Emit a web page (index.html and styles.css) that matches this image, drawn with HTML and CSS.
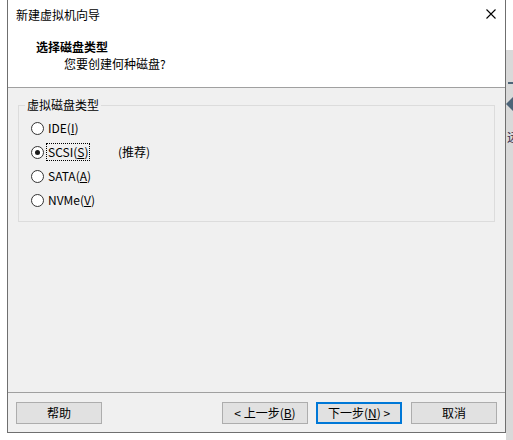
FILE: index.html
```html
<!DOCTYPE html>
<html lang="zh-CN">
<head>
<meta charset="utf-8">
<title>新建虚拟机向导</title>
<link rel="stylesheet" href="styles.css">
</head>
<body>
<div class="window">
  <div class="titlebar">
    <span class="title">新建虚拟机向导</span>
    <svg class="close" width="10" height="10" viewBox="0 0 10 10" aria-hidden="true">
      <path d="M0.5 0.5 L9.5 9.5 M9.5 0.5 L0.5 9.5" stroke="#000" stroke-width="1.1" fill="none"/>
    </svg>
  </div>
  <div class="header">
    <div class="heading">选择磁盘类型</div>
    <div class="subtitle">您要创建何种磁盘?</div>
  </div>
  <div class="content">
    <fieldset class="group">
      <legend class="legend">虚拟磁盘类型</legend>
      <div class="options">
        <div class="row">
          <span class="radio"></span><span class="label">IDE(<u>I</u>)</span>
        </div>
        <div class="row">
          <span class="opt"><span class="radio checked"></span><span class="label focus">SCSI(<u>S</u>)</span></span>
          <span class="rec">(推荐)</span>
        </div>
        <div class="row">
          <span class="radio"></span><span class="label">SATA(<u>A</u>)</span>
        </div>
        <div class="row">
          <span class="radio"></span><span class="label">NVMe(<u>V</u>)</span>
        </div>
      </div>
    </fieldset>
  </div>
  <div class="footer">
    <button class="btn">帮助</button>
    <span class="grow"></span>
    <button class="btn">&lt; 上一步(<u>B</u>)</button>
    <button class="btn primary">下一步(<u>N</u>) &gt;</button>
    <button class="btn cancel">取消</button>
  </div>
</div>
<div class="side">
  <div class="side-top"></div>
  <div class="side-rest">
    <span class="dash"></span>
    <span class="arrow"></span>
    <span class="glyph">远</span>
  </div>
</div>
</body>
</html>
```

FILE: styles.css
```css
html, body {
  margin: 0;
  padding: 0;
}
body {
  background: #fff;
  display: flex;
  height: 440px;
  overflow: hidden;
  font-family: "Noto Sans CJK SC", "Microsoft YaHei", "Noto Sans", sans-serif;
  font-size: 12px;
  color: #000;
}
.window {
  margin-left: 7px;
  width: 497px;
  height: 432px;
  border: 1px solid #6f6f6f;
  border-top: none;
  display: flex;
  flex-direction: column;
  background: #f0f0f0;
  flex: none;
}
.titlebar {
  height: 30px;
  background: #fff;
  display: flex;
  align-items: center;
  justify-content: space-between;
  padding: 0 9px 0 8px;
}
.title {
  line-height: 16px;
}
.close {
  display: block;
  margin-bottom: 2px;
}
.header {
  background: #fff;
  height: 58px;
  box-sizing: border-box;
  border-bottom: 1px solid #a0a0a0;
  padding-top: 8px;
}
.heading {
  font-weight: bold;
  line-height: 17px;
  padding-left: 28px;
}
.subtitle {
  line-height: 17px;
  padding-left: 56px;
}
.content {
  flex: 1;
  padding-top: 9px;
}
.group {
  margin: 0 10px;
  padding: 3px 0 9px 0;
  border: 1px solid #dcdcdc;
  min-width: 0;
}
.legend {
  margin-left: 6px;
  padding: 0 2px;
  line-height: 16px;
}
.options {
  padding-left: 12px;
}
.row {
  display: flex;
  align-items: center;
  height: 24px;
}
.opt {
  display: flex;
  align-items: center;
  width: 87px;
  flex: none;
}
.radio {
  width: 13px;
  height: 13px;
  box-sizing: border-box;
  border: 1px solid #333;
  border-radius: 50%;
  background: #fff;
  margin-right: 2px;
  display: flex;
  align-items: center;
  justify-content: center;
  flex: none;
}
.radio.checked::after {
  content: "";
  width: 5px;
  height: 5px;
  border-radius: 50%;
  background: #1a1a1a;
}
.label {
  border: 1px dotted transparent;
  padding: 0 1px;
  line-height: 16px;
}
.label.focus {
  border-color: #000;
}
.rec {
  line-height: 16px;
}
.footer {
  border-top: 1px solid #a0a0a0;
  padding: 9px 8px 8px;
  display: flex;
}
.grow {
  flex: 1;
}
.btn {
  width: 86px;
  height: 22px;
  box-sizing: border-box;
  background: #e1e1e1;
  border: 1px solid #adadad;
  padding: 0;
  font: inherit;
  line-height: 18px;
  color: #000;
}
.btn.primary {
  border: 2px solid #0078d7;
  margin-left: 8px;
}
.btn.cancel {
  margin-left: 9px;
}
.side {
  flex: 1;
  display: flex;
  flex-direction: column;
  overflow: hidden;
}
.side-top {
  height: 50px;
  background: #fff;
}
.side-rest {
  flex: 1;
  background: #d9d9d9;
  display: flex;
  flex-direction: column;
  align-items: flex-start;
}
.dash {
  margin-top: 32px;
  margin-left: 2px;
  width: 6px;
  height: 2px;
  background: #4d6478;
}
.arrow {
  margin-top: 13px;
  width: 0;
  height: 0;
  border-right: 7px solid #4d6478;
  border-top: 7px solid transparent;
  border-bottom: 7px solid transparent;
}
.glyph {
  margin-top: 20px;
  margin-left: 1px;
  line-height: 12px;
  color: #3a2a4a;
  white-space: nowrap;
}
```
